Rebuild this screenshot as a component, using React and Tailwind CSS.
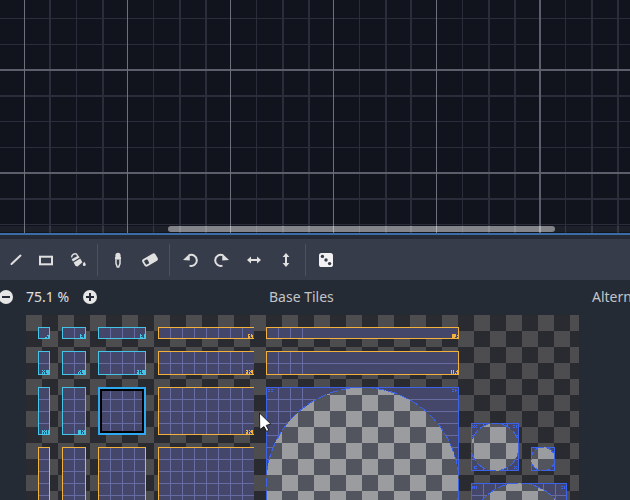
const vMajor = [[24, 1], [127, 1], [230, 1], [333, 1], [436, 1], [539, 2]];
const vMinor = [[49, 2], [76, 1], [102, 2], [153, 1], [179, 2], [205, 2], [256, 1], [282, 2], [308, 2], [359, 1], [385, 2], [410, 2], [462, 1], [488, 2], [514, 2], [565, 1], [591, 2], [617, 2]];
const hMinor = [[18, 1], [44, 1], [95, 2], [121, 1], [147, 1], [198, 2], [224, 1]];
const hMajor = [[69, 2], [172, 2]];

function GridDrawing() {
  return (
    <svg width="630" height="233" viewBox="0 0 630 233" shapeRendering="crispEdges" className="block">
      <rect width="630" height="233" fill="#11141d" />
      {hMinor.map(([y, h]) => <rect key={y} x="0" y={y} width="630" height={h} fill="#2b2d3b" />)}
      {vMinor.map(([x, w]) => <rect key={x} x={x} y="0" width={w} height="233" fill="#2b2d3b" />)}
      {hMajor.map(([y, h]) => <rect key={y} x="0" y={y} width="630" height={h} fill="#5c5e6b" />)}
      {vMajor.map(([x, w]) => <rect key={x} x={x} y="0" width={w} height="233" fill={w === 2 ? "#5c5e6b" : "#6d6f7c"} />)}
    </svg>
  );
}

const FILL = "#44476a";
const LINE = "#666ca2";
const ORANGE = "#f2b03c";
const CYAN = "#46c4e8";
const BLUE = "#3c64ea";

function Marks({ right, bottom, rows, color }) {
  const out = [];
  rows.forEach((row, r) => {
    [...row].forEach((c, i) => {
      if (c === "#") out.push(<rect key={r + "-" + i} x={right - row.length + i} y={bottom - rows.length + r} width="1" height="1" fill={color} />);
    });
  });
  return <g>{out}</g>;
}

function Tile({ x, y, w, h, color, marks, vLimit, openRight }) {
  const vs = [];
  const hs = [];
  for (let px = x + 12; px < x + w; px += 12) if (!vLimit || px <= vLimit) vs.push(px);
  for (let py = y + 12; py < y + h; py += 12) hs.push(py);
  return (
    <g>
      <rect x={x} y={y} width={w} height={h} fill={FILL} />
      {vs.map((p) => <rect key={"v" + p} x={p} y={y} width="1" height={h} fill={LINE} />)}
      {hs.map((p) => <rect key={"h" + p} x={x} y={p} width={w} height="1" fill={LINE} />)}
      <rect x={x} y={y} width={w} height="1" fill={color} />
      <rect x={x} y={y + h - 1} width={w} height="1" fill={color} />
      <rect x={x} y={y} width="1" height={h} fill={color} />
      {!openRight && <rect x={x + w - 1} y={y} width="1" height={h} fill={color} />}
      {marks && <Marks right={x + w - 1} bottom={y + h - 1} rows={marks} color={color} />}
    </g>
  );
}

function CircleTile({ x, y, w, h, cx, cy, r, vLimit }) {
  return (
    <g>
      <Tile x={x} y={y} w={w} h={h} color={BLUE} vLimit={vLimit} />
      <circle cx={cx} cy={cy} r={r} fill="url(#bright)" />
      <circle cx={cx} cy={cy} r={r} fill="none" stroke={BLUE} strokeWidth="1" strokeDasharray="9 3" />
    </g>
  );
}

function Atlas() {
  return (
    <svg width="553" height="185" viewBox="26 315 553 185" shapeRendering="crispEdges" className="block">
      <defs>
        <pattern id="dim" patternUnits="userSpaceOnUse" x="26" y="315" width="32" height="32">
          <rect width="32" height="32" fill="#2a2b30" />
          <rect width="16" height="16" fill="#4d4d50" />
          <rect x="16" y="16" width="16" height="16" fill="#4d4d50" />
        </pattern>
        <pattern id="bright" patternUnits="userSpaceOnUse" x="26" y="315" width="32" height="32">
          <rect width="32" height="32" fill="#52555d" />
          <rect width="16" height="16" fill="#9a9c9f" />
          <rect x="16" y="16" width="16" height="16" fill="#9a9c9f" />
        </pattern>
      </defs>
      <rect x="26" y="315" width="553" height="185" fill="url(#dim)" />

      <Tile x={38} y={327} w={12} h={12} color={CYAN} marks={["  ##", "   #", "## #"]} />
      <Tile x={62} y={327} w={24} h={12} color={CYAN} marks={["#   #", "##  #", "#   #", "### #"]} />
      <Tile x={98} y={327} w={48} h={12} color={CYAN} marks={["#   #", "##  #", "#   #", "### #"]} />
      <Tile x={158} y={327} w={96} h={12} color={ORANGE} openRight marks={null} />
      <Marks right={253} bottom={338} rows={["## # ", "#  ##", "## ##", "##  #"]} color={ORANGE} />
      <Tile x={266} y={327} w={193} h={12} color={ORANGE} vLimit={302} marks={["####  ", "#### #", "####  ", "###  #"]} />

      <Tile x={38} y={351} w={12} h={24} color={CYAN} marks={["# # ###", " #  ###", "# # ###", "# #  ##"]} />
      <Tile x={62} y={351} w={24} h={24} color={CYAN} marks={["  # ###", " #  ###", "# # ###", "# #  ##"]} />
      <Tile x={98} y={351} w={48} h={24} color={CYAN} marks={["## # ###", " #   ###", "## # ###", "## #  ##"]} />
      <Tile x={158} y={351} w={96} h={24} color={ORANGE} openRight />
      <Marks right={253} bottom={374} rows={["## # ##", " #  ###", "## # ##", "## #  #"]} color={ORANGE} />
      <Tile x={266} y={351} w={193} h={24} color={ORANGE} vLimit={302} marks={["# #   #", "# #  ##", "# #   #", "# # # #"]} />

      <Tile x={38} y={387} w={12} h={48} color={CYAN} marks={["# # # #", "## ## #", "# # # #", "# # # #"]} />
      <Tile x={62} y={387} w={24} h={48} color={CYAN} marks={["### # #", "###  ##", "### # #", "### # #"]} />
      <Tile x={158} y={387} w={96} h={48} color={ORANGE} openRight />
      <Marks right={253} bottom={434} rows={["## # ##", " #  ###", "## # ##", "## #  #"]} color={ORANGE} />

      <g>
        <rect x="98" y="387" width="48" height="48" fill={FILL} />
        {[110, 122, 134].map((p) => <rect key={p} x={p} y="387" width="1" height="48" fill={LINE} />)}
        {[399, 411, 423].map((p) => <rect key={p} x="98" y={p} width="48" height="1" fill={LINE} />)}
        <rect x="99" y="388" width="46" height="46" fill="none" stroke="#2ea8f0" strokeWidth="2" />
        <rect x="101" y="390" width="42" height="42" fill="none" stroke="#000000" strokeWidth="2" />
      </g>

      <Tile x={38} y={447} w={12} h={96} color={ORANGE} />
      <Tile x={62} y={447} w={24} h={96} color={ORANGE} />
      <Tile x={98} y={447} w={48} h={96} color={ORANGE} />
      <Tile x={158} y={447} w={96} h={96} color={ORANGE} openRight />

      <CircleTile x={266} y={387} w={193} h={193} cx={362.5} cy={484} r={96.5} vLimit={302} />
      <Marks right={273} bottom={392} rows={["## ##", "     ", "## ##"]} color={BLUE} />
      <Marks right={457} bottom={392} rows={["## # ", "   ##", "## # "]} color={BLUE} />

      <CircleTile x={471} y={423} w={48} h={48} cx={495} cy={447} r={24} />
      <Marks right={477} bottom={428} rows={["# # #", " # # ", "# # #"]} color={BLUE} />
      <Marks right={517} bottom={428} rows={["## #", "   #", "## #"]} color={BLUE} />
      <Marks right={477} bottom={469} rows={["###", "#  ", "###"]} color={BLUE} />
      <Marks right={517} bottom={469} rows={["# #", " # ", "# #"]} color={BLUE} />
      <CircleTile x={531} y={447} w={24} h={24} cx={543} cy={459} r={12} />
      <CircleTile x={471} y={483} w={96} h={96} cx={519} cy={531} r={48} />
      <Marks right={477} bottom={489} rows={["# # #", "### #", "# # #"]} color={BLUE} />
      <Marks right={565} bottom={489} rows={["## #", "   #", "## #"]} color={BLUE} />
    </svg>
  );
}

const IC = "#e0e0e0";
const BG = "#363c4a";

function Ico({ children, className = "" }) {
  return <svg width="16" height="16" viewBox="0 0 16 16" className={"block shrink-0 " + className}>{children}</svg>;
}

const Pencil = () => <Ico><path d="M3.5 12 L12.5 3.6" stroke={IC} strokeWidth="2" strokeLinecap="round" /></Ico>;
const RectTool = () => <Ico className="ml-[14px]"><rect x="2" y="4.7" width="12" height="7.6" fill="none" stroke={IC} strokeWidth="2" /></Ico>;
const Bucket = () => (
  <Ico className="ml-4">
    <path d="M1.6 5.6 C1.6 2.6 4.4 1 6.6 2.2 L7.6 4" fill="none" stroke={IC} strokeWidth="1.4" />
    <path d="M1.6 7.2 L8.4 3.4 L9.6 5.6 L3 9.4 Z" fill={IC} />
    <path d="M3.6 10.4 L10.2 6.6 L12.4 10.2 L7.6 14.4 L5.6 14 Z" fill={IC} />
    <path d="M14.2 9.8 C13.5 11.1 12.8 11.7 12.8 12.6 A1.5 1.5 0 0 0 15.8 12.6 C15.8 11.7 15 11.1 14.2 9.8 Z" fill={IC} />
  </Ico>
);
const Dropper = () => (
  <Ico>
    <circle cx="8" cy="3.4" r="2.6" fill={IC} />
    <rect x="5" y="4.8" width="6" height="2.8" fill={IC} />
    <path d="M6 7.4 V11.6 L7.3 15 H8.7 L10 11.6 V7.4" fill="none" stroke={IC} strokeWidth="1.5" />
  </Ico>
);
const Eraser = () => (
  <Ico className="ml-4">
    <g transform="rotate(-30 8 8)">
      <rect x="0.4" y="3.8" width="15.2" height="8.4" rx="2.4" fill={IC} />
      <rect x="2.2" y="5.8" width="3.8" height="4.6" rx="0.8" fill={BG} />
    </g>
  </Ico>
);
const Undo = () => (
  <Ico>
    <path d="M7.5 13.6 A5.5 5.5 0 1 0 7 3.4" fill="none" stroke={IC} strokeWidth="2" />
    <path d="M1 8 L7.6 1.8 L7.8 8.6 Z" fill={IC} />
  </Ico>
);
const Redo = () => (
  <Ico className="ml-4">
    <g transform="matrix(-1 0 0 1 16 0)">
      <path d="M7.5 13.6 A5.5 5.5 0 1 0 7 3.4" fill="none" stroke={IC} strokeWidth="2" />
      <path d="M1 8 L7.6 1.8 L7.8 8.6 Z" fill={IC} />
    </g>
  </Ico>
);
const FlipH = () => (
  <Ico className="ml-4">
    <path d="M3 8 H13" stroke={IC} strokeWidth="2" />
    <path d="M1 8 L5 4.6 V11.4 Z M15 8 L11 4.6 V11.4 Z" fill={IC} />
  </Ico>
);
const FlipV = () => (
  <Ico className="ml-4">
    <path d="M8 3 V13" stroke={IC} strokeWidth="2" />
    <path d="M8 1 L4.6 5 H11.4 Z M8 15 L4.6 11 H11.4 Z" fill={IC} />
  </Ico>
);
const Dice = () => (
  <Ico>
    <rect x="1" y="1" width="14" height="14" rx="2.6" fill="#f2f2f2" />
    <circle cx="4.4" cy="4.4" r="1.7" fill={BG} />
    <circle cx="8" cy="8" r="1.7" fill={BG} />
    <circle cx="11.6" cy="11.6" r="1.7" fill={BG} />
  </Ico>
);

const Sep = () => <div className="w-px h-[32px] ml-[11px] mr-3 bg-[#4b515e] shrink-0" />;

function Zoomer({ plus }) {
  return (
    <Ico>
      <circle cx="8" cy="8" r="7" fill="#e6e6e6" />
      <rect x="4" y="7" width="8" height="2" fill="#252b34" />
      {plus && <rect x="7" y="4" width="2" height="8" fill="#252b34" />}
    </Ico>
  );
}

export default function App() {
  return (
    <div className="relative w-[630px] h-[500px] overflow-hidden flex flex-col bg-[#252b34] font-['Noto_Sans',sans-serif] text-sm">
      <div className="relative h-[233px] shrink-0">
        <GridDrawing />
        <div className="absolute left-0 right-0 top-[226px] h-[6px] bg-white/5">
          <div className="absolute left-[168px] w-[387px] h-full rounded-sm bg-white/45" />
        </div>
      </div>
      <div className="h-[2px] shrink-0 bg-[#3b6ca6]" />
      <div className="h-[4px] shrink-0" />
      <div className="h-[41px] shrink-0 flex items-center bg-[#363c4a] pl-2 pt-px">
        <Pencil />
        <RectTool />
        <Bucket />
        <Sep />
        <Dropper />
        <Eraser />
        <Sep />
        <Undo />
        <Redo />
        <FlipH />
        <FlipV />
        <Sep />
        <Dice />
      </div>
      <div className="h-[35px] shrink-0 flex items-center whitespace-nowrap pb-[2px]">
        <div className="-ml-[2px] shrink-0"><Zoomer /></div>
        <span className="ml-[12px] w-[44px] shrink-0 text-[#e0e0e0]">75.1 %</span>
        <div className="ml-[12px] shrink-0"><Zoomer plus /></div>
        <span className="ml-[171px] w-[65px] shrink-0 text-[#c2c4c8]">Base Tiles</span>
        <span className="ml-[258px] shrink-0 text-[#c2c4c8]">Alternative Tiles</span>
      </div>
      <div className="pl-[26px]">
        <Atlas />
      </div>
      <svg width="14" height="20" viewBox="0 0 14 20" className="absolute left-[258px] top-[412px]">
        <path d="M1.5 1 L1.8 17.5 L6 14.6 L8.6 19.4 L10.8 18.2 L8.2 13.4 L12.8 12 Z" fill="#ffffff" stroke="#000000" strokeWidth="0.8" />
      </svg>
    </div>
  );
}
